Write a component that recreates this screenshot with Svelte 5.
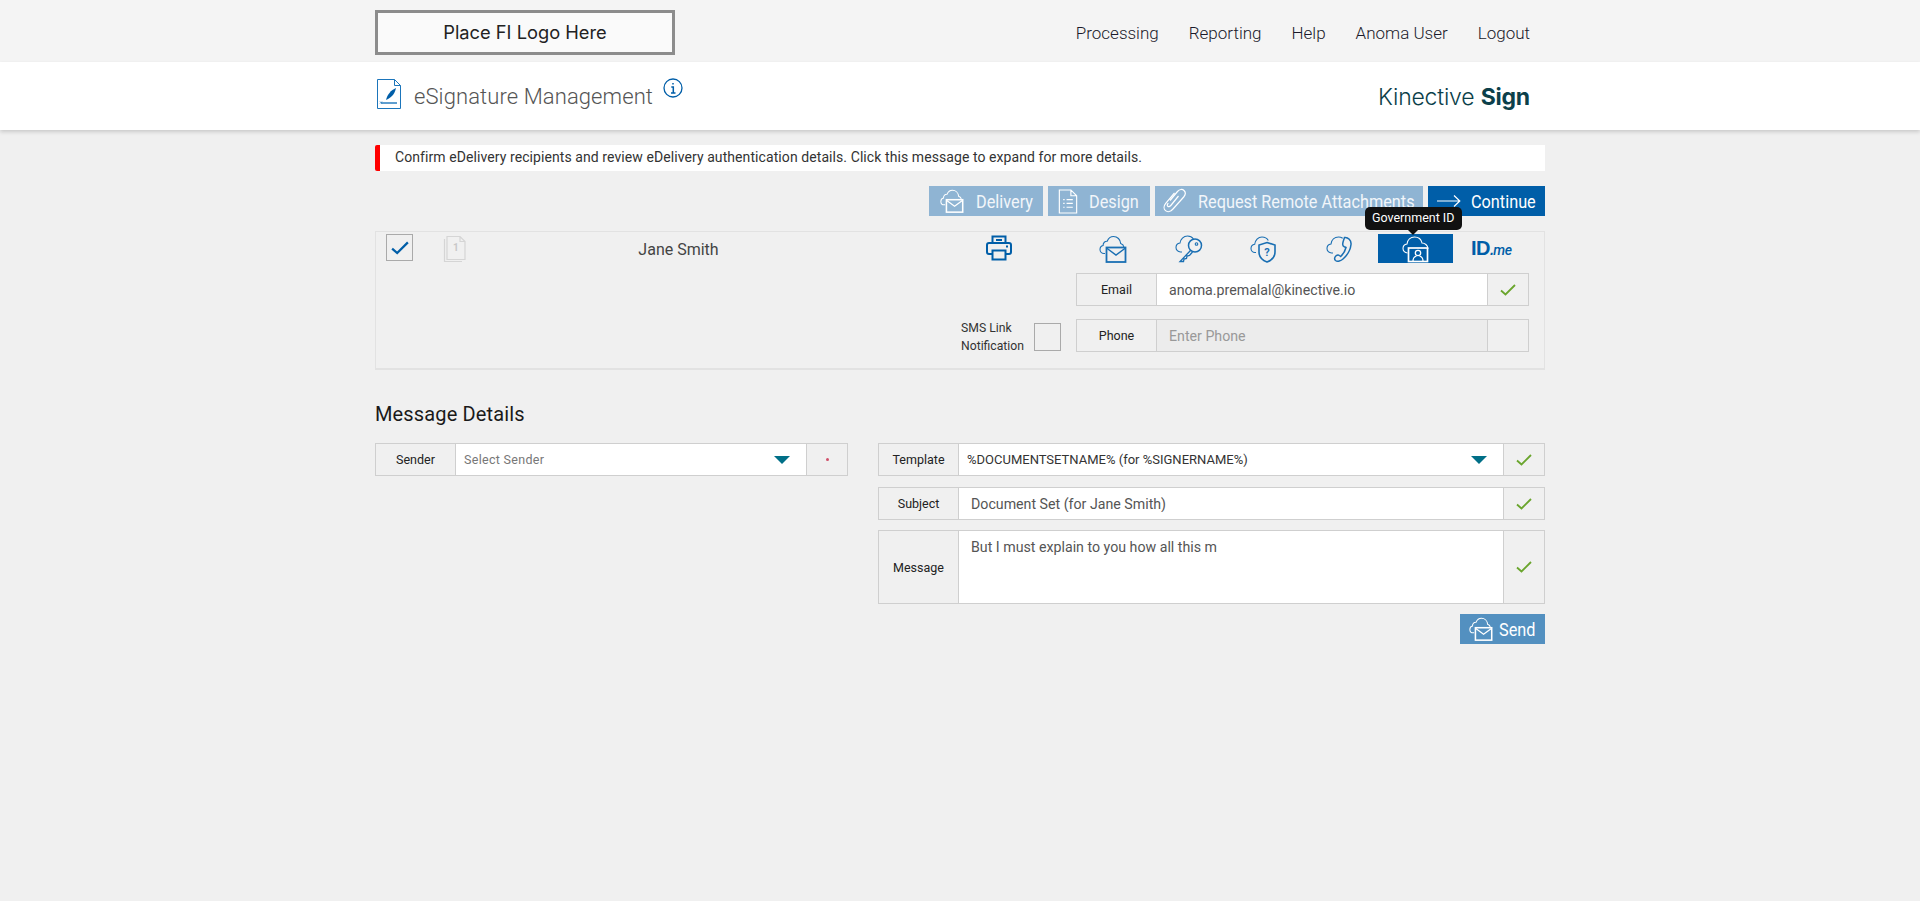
<script>
  const nav = ['Processing', 'Reporting', 'Help', 'Anoma User', 'Logout'];
</script>

{#snippet cloud()}
  <path d="M6 18.500H5C2.800 18.500 1 16.700 1 14.500c0-2 1.300-3.600 3.100-4C4 7.800 6 6 8.200 6.200 9.300 3.500 11.700 1.500 14.500 1.500c3.900 0 6.900 3 7.200 7 1.800.6 3 2 3.300 3.800" />
{/snippet}
{#snippet envelope()}
  <rect x="7.500" y="12.500" width="19" height="14.500" stroke-width="1.800" />
  <path d="M7.500 13l9.500 7 9.500-7" stroke-width="1.500" />
{/snippet}
{#snippet check()}
  <svg class="tick" viewBox="0 0 16 12"><path d="M1 6.500l4.500 4L15 1" /></svg>
{/snippet}

<div class="page">
  <header class="top">
    <div class="wrap top-in">
      <div class="logo">Place FI Logo Here</div>
      <nav>
        {#each nav as item}<a href="#top">{item}</a>{/each}
      </nav>
    </div>
  </header>

  <div class="band">
    <div class="wrap band-in">
      <div class="title">
        <svg class="doc" viewBox="0 0 24 30">
          <path d="M.5.500h17l6 6v23H.500z M17.500.500v6h6" />
          <path class="fill" d="M9 21c1-5 5-10 10-12-1 4-2 6-4 8-1.500 1.500-3 2.500-6 4z" />
          <path d="M4 24h16" stroke-width="1.400" />
          <path d="M3 22.500l2 2m0-2l-2 2" stroke-width=".7" />
        </svg>
        <span>eSignature Management</span>
        <svg class="info" viewBox="0 0 20 20">
          <circle cx="10" cy="10" r="9" />
          <path d="M10 5v1.600M8.300 9H10.300v6M8 15h4.500" stroke-width="1.500" />
        </svg>
      </div>
      <div class="brand">Kinective <b>Sign</b></div>
    </div>
  </div>

  <main class="wrap">
    <div class="alert">Confirm eDelivery recipients and review eDelivery authentication details. Click this message to expand for more details.</div>

    <div class="toolbar">
      <button class="faded delivery">
        <svg class="white" viewBox="0 0 28 28" width="26" height="24">{@render cloud()}{@render envelope()}</svg>
        <span>Delivery</span>
      </button>
      <button class="faded design">
        <svg class="white" viewBox="0 0 20 26" width="20" height="25"><path d="M1 1h12l6 6v18H1z M13 1v6h6 M5 11h1.500M8.500 11H15M5 15h1.500M8.500 15H15M5 19h1.500M8.500 19H15" /></svg>
        <span>Design</span>
      </button>
      <button class="faded remote">
        <svg class="white" viewBox="0 0 24 26" width="24" height="26"><path d="M7 12.500l7.500-9c2-2.300 4.700-2.700 6.500-1s1.500 4.300-.3 6.500L10 21c-2.400 2.800-5.500 3.300-7.500 1.600s-1.800-4.800.2-7.200l8.800-10.500M15.500 8l-7.700 9.500c-1 1.200-2.400 1.400-3 .8-.7-.6-.5-2 .5-3.200" /></svg>
        <span>Request Remote Attachments</span>
      </button>
      <button class="solid continue">
        <svg class="white" viewBox="0 0 24 14" width="24" height="14"><path d="M0 7h22.500M17 1.500L22.800 7 17 12.500" /></svg>
        <span>Continue</span>
      </button>
    </div>

    <section class="panel">
      <div class="p-left">
        <span class="box on"><svg viewBox="0 0 16 12"><path d="M1 6.500l4.500 4L15 1" /></svg></span>
        <svg class="pages" viewBox="0 0 24 28">
          <path d="M4 1.500h13l5 5v18H4z M17 1.500v5h5 M1.500 4v22.500H19" />
          <text x="10" y="16">1</text>
        </svg>
        <div class="name">Jane Smith</div>
      </div>
      <svg class="printer" viewBox="0 0 26 26">
        <path d="M6.500 8V1.500h13V8M6.500 19H3a2 2 0 0 1-2-2v-7a2 2 0 0 1 2-2h20a2 2 0 0 1 2 2v7a2 2 0 0 1-2 2h-3.500M6.500 15.500h13v9h-13zM10 5h6M20 11.500h2" stroke-width="2" />
      </svg>
      <div class="p-right">
        <div class="tabs">
          <div class="tab">
            <svg viewBox="0 0 28 28">{@render cloud()}{@render envelope()}</svg>
          </div>
          <div class="tab">
            <svg viewBox="0 0 28 28">
              <path d="M7 17H5.500C3 17 1 15 1 12.500 1 10.200 2.700 8.300 5 8 5.500 4.500 8.500 1 12.500 1c2.500 0 4.700 1.200 6 3" />
              <circle cx="20" cy="10.500" r="6.500" stroke-width="1.500" />
              <circle cx="21.500" cy="9" r="1.300" />
              <path d="M15.500 15.500L5 26.500h3.500l.5-2.500 2.500-.5.500-2.500 2.500-.5 3-3.500" stroke-width="1.300" />
            </svg>
          </div>
          <div class="tab">
            <svg viewBox="0 0 28 28">
              <path d="M6 17.500H5C2.800 17.500 1 15.700 1 13.500 1 11.300 2.600 9.600 4.700 9.300 5.200 5.500 8 2 12 2c2.500 0 5 1.300 6.300 3.500" />
              <path d="M17 7.500l8 2.500v7c0 4.800-3.500 8.300-8 10-4.500-1.700-8-5.200-8-10v-7z" stroke-width="1.600" />
              <text class="q" x="17" y="21">?</text>
            </svg>
          </div>
          <div class="tab">
            <svg viewBox="0 0 28 28">
              <path d="M7 18H5.500C3 18 1 16 1 13.500 1 11.200 2.700 9.300 5 9 5.500 5 8.500 2 12.500 2c1.500 0 3 .5 4.200 1.300" />
              <path d="M18.500 2.500c3.500-.5 7 3 6.500 7-.6 5.500-4 11-8 14.500-2 1.800-5.500 3-7.500 1.500-1.200-1-1.300-3 .3-4.500 1.200-1 2.500-1.400 3.600-.5l1.300 1c2.500-2.300 4.500-5.700 5.300-9l-1.700-.7c-1.300-.6-1.800-2-1.500-3.500.2-1.600 1-3.500 1.700-5.800z" stroke-width="1.500" />
            </svg>
          </div>
          <div class="tab active">
            <span class="tooltip">Government ID</span>
            <svg viewBox="0 0 28 28">
              <path d="M5.500 18C3 18 1 16 1 13.500 1 11.200 2.700 9.300 5 9 5.500 5 8.500 2 12.500 2c3.800 0 6.800 2.500 7.500 6 2.500 0 6 2 6 6" />
              <rect x="6.500" y="13" width="19" height="13.500" stroke-width="1.700" />
              <circle cx="16" cy="18" r="2.700" stroke-width="1.300" />
              <path d="M11 26c0-3.500 2-4.500 3.500-5M21 26c0-3.500-2-4.500-3.500-5" stroke-width="1.300" />
            </svg>
          </div>
          <div class="tab idme"><b>ID</b><i><b>.</b>me</i></div>
        </div>

        <div class="row">
          <div class="spacer"></div>
          <div class="field f-email">
            <label for="em">Email</label>
            <input id="em" value="anoma.premalal@kinective.io" />
            <div class="status">{@render check()}</div>
          </div>
        </div>
        <div class="row sms-row">
          <div class="spacer sms">
            <span>SMS Link<br />Notification</span>
            <span class="box big"></span>
          </div>
          <div class="field f-email off">
            <label for="ph">Phone</label>
            <input id="ph" placeholder="Enter Phone" />
            <div class="status"></div>
          </div>
        </div>
      </div>
    </section>

    <h2>Message Details</h2>

    <div class="details">
      <div class="col-l">
        <div class="field">
          <label for="snd">Sender</label>
          <div id="snd" class="select muted">Select Sender<span class="caret"></span></div>
          <div class="status"><span class="req"></span></div>
        </div>
      </div>
      <div class="col-r">
        <div class="field">
          <label for="tpl">Template</label>
          <div id="tpl" class="select">%DOCUMENTSETNAME% (for %SIGNERNAME%)<span class="caret"></span></div>
          <div class="status">{@render check()}</div>
        </div>
        <div class="field">
          <label for="sub">Subject</label>
          <input id="sub" value="Document Set (for Jane Smith)" />
          <div class="status">{@render check()}</div>
        </div>
        <div class="field tall">
          <label for="msg">Message</label>
          <textarea id="msg" value="But I must explain to you how all this m"></textarea>
          <div class="status">{@render check()}</div>
        </div>
        <div class="send-row">
          <button class="send">
            <svg class="white" viewBox="0 0 28 28" width="24" height="24">{@render cloud()}{@render envelope()}</svg>
            <span>Send</span>
          </button>
        </div>
      </div>
    </div>
  </main>
</div>

<style>
  :global(body) {
    margin: 0;
    background: #f0f0f0;
    font-family: Roboto, "Liberation Sans", sans-serif;
    color: #222;
  }
  .page { min-height: 901px; }
  .wrap { width: 1170px; margin: 0 auto; }

  .top { height: 62px; background: #f4f4f4; }
  .top-in { display: flex; justify-content: space-between; height: 62px; }
  .logo {
    box-sizing: border-box;
    width: 300px;
    height: 45px;
    margin-top: 10px;
    border: 3px solid #8c8c8c;
    background: #fafafa;
    display: flex;
    align-items: center;
    justify-content: center;
    font: 400 18.300px Inter, sans-serif;
    padding-bottom: 2px;
    color: #222;
  }
  nav { display: flex; gap: 30px; padding: 23px 15px 0 0; }
  nav a { font-size: 17px; font-weight: 300; color: #1a1a2a; text-decoration: none; line-height: 20px; }

  .band { height: 68px; background: #fff; box-shadow: 0 2px 4px rgba(0, 0, 0, .16); position: relative; }
  .band-in { display: flex; justify-content: space-between; height: 68px; }
  .title { display: flex; align-items: flex-start; padding: 16px 0 0 2px; }
  .title span { font-size: 22px; font-weight: 300; color: #555; margin: 6px 0 0 13px; letter-spacing: .1px; }
  .doc { width: 24px; height: 30px; margin-top: 1px; fill: none; stroke: #1b75bb; stroke-width: 1; }
  .doc .fill { fill: #005ea8; stroke: none; }
  .info { width: 20px; height: 20px; margin: 0 0 0 10px; fill: none; stroke: #005ea8; stroke-width: 1.300; }
  .brand { font: 300 23px Inter, sans-serif; color: #0c3f4a; padding: 21px 15px 0 0; letter-spacing: -.2px; }
  .brand b { font-weight: 700; }

  .alert {
    box-sizing: border-box;
    height: 26px;
    margin-top: 15px;
    background: #fff;
    border-left: 5px solid #f00;
    padding-left: 15px;
    font-size: 14px;
    line-height: 25px;
    color: #333;
    letter-spacing: .08px;
    border-radius: 2px 0 0 2px;
  }

  .toolbar { display: flex; justify-content: flex-end; gap: 5px; margin-top: 15px; }
  button {
    height: 30px;
    border: 0;
    display: flex;
    align-items: center;
    color: #fff;
    font: 400 17.500px Roboto, sans-serif;
    padding: 0;
    white-space: nowrap;
  }
  button span { display: inline-block; transform: scaleX(.93); transform-origin: left center; padding-top: 2px; }
  .faded { background: #8fb4d3; color: #f2f6fa; }
  .solid { background: #005ea8; }
  .delivery { width: 114px; padding-left: 10px; gap: 11px; }
  .design { width: 102px; padding-left: 10px; gap: 11px; }
  .remote { width: 268px; padding-left: 8px; gap: 11px; }
  .continue { width: 117px; padding-left: 9px; gap: 10px; }
  .white { fill: none; stroke: #fff; stroke-width: 1.200; flex: none; }

  .panel {
    box-sizing: border-box;
    height: 139px;
    margin-top: 15px;
    border: 1px solid #e2e2e2;
    border-bottom-width: 2px;
    display: flex;
    position: relative;
  }
  .p-left { width: 580px; display: flex; align-items: flex-start; padding: 2px 0 0 10px; box-sizing: border-box; }
  .box { box-sizing: border-box; display: block; border: 1px solid #aaa; flex: none; }
  .box.on { width: 27px; height: 27px; display: flex; align-items: center; justify-content: center; }
  .box.on svg { width: 18px; height: 14px; fill: none; stroke: #005ea8; stroke-width: 2; }
  .box.big { width: 27px; height: 28px; }
  .pages { width: 24px; height: 28px; margin: 1px 0 0 30px; fill: none; stroke: #d5d5d5; stroke-width: 1.200; flex: none; }
  .pages text { font: 700 10px Roboto, sans-serif; fill: #c8c8c8; stroke: none; }
  .name { flex: 1; text-align: center; font-size: 16px; color: #444; padding: 6px 66px 0 0; }
  .printer { width: 26px; height: 26px; margin: 3px 0 0 30px; fill: none; stroke: #005ea8; flex: none; }

  .p-right { position: absolute; left: 498px; right: 15px; top: 0; }
  .tabs { display: flex; height: 29px; margin-top: 2px; padding-left: 201px; }
  .tab { flex: 1 1 0; min-width: 0; display: flex; align-items: center; justify-content: center; position: relative; }
  .tab svg { width: 28px; height: 28px; fill: none; stroke: #1a6fb3; stroke-width: 1.100; }
  .tab.active { background: #005ea8; }
  .tab.active svg { stroke: #fff; }
  .tooltip {
    position: absolute;
    top: -27px;
    left: -13px;
    width: 97px;
    height: 23px;
    background: #111;
    color: #fff;
    border-radius: 5px;
    font-size: 12.500px;
    line-height: 21px;
    text-align: center;
  }
  .tooltip::after {
    content: "";
    position: absolute;
    left: 43px;
    top: 23px;
    border: 5px solid transparent;
    border-top-color: #111;
    border-bottom: 0;
  }
  .q { font: 700 11px Roboto, sans-serif; fill: #1a6fb3; stroke: none; text-anchor: middle; }
  .idme { color: #005ea8; font-size: 20px; letter-spacing: -.5px; }
  .idme b { font-family: "Liberation Sans", sans-serif; font-weight: 700; }
  .idme i { font: italic 500 14px Roboto, sans-serif; margin-top: 3px; }

  .row { display: flex; justify-content: flex-end; }
  .row:not(.sms-row) { margin-top: 10px; }
  .sms-row { margin-top: 13px; }
  .spacer { flex: 1; }
  .sms { display: flex; justify-content: flex-end; align-items: center; gap: 10px; font-size: 12.200px; line-height: 18px; color: #333; padding-right: 15px; }

  .field { display: flex; height: 33px; box-sizing: border-box; border: 1px solid #cfcfcf; background: #f0f0f0; }
  .f-email { width: 453px; flex: none; }
  label {
    box-sizing: border-box;
    width: 80px;
    flex: none;
    border-right: 1px solid #cfcfcf;
    display: flex;
    align-items: center;
    justify-content: center;
    font-size: 12.500px;
    color: #222;
  }
  input, textarea, .select {
    flex: 1;
    min-width: 0;
    box-sizing: border-box;
    border: 0;
    outline: 0;
    background: #fff;
    font: 400 14.200px Roboto, sans-serif;
    color: #555;
    padding: 0 12px;
    margin: 0;
  }
  .off input { background: #ececec; }
  input::placeholder { color: #999; opacity: 1; }
  .status {
    box-sizing: border-box;
    width: 41px;
    flex: none;
    border-left: 1px solid #cfcfcf;
    display: flex;
    align-items: center;
    justify-content: center;
  }
  .tick { width: 16px; height: 12px; fill: none; stroke: #6aa52d; stroke-width: 1.800; }

  h2 { font-size: 20px; font-weight: 400; color: #1a1a1a; margin: 31px 0 0; line-height: 26px; letter-spacing: .15px; }

  .details { display: flex; justify-content: space-between; margin-top: 16px; }
  .col-l { width: 473px; }
  .col-r { width: 667px; display: flex; flex-direction: column; gap: 11px; }
  .col-r .field + .field.tall { margin-top: -1px; }
  .select {
    display: flex;
    align-items: center;
    justify-content: space-between;
    padding: 0 16px 0 8px;
    font-size: 13px;
    color: #333;
  }
  .select.muted { color: #777; letter-spacing: .3px; font-size: 12.500px; }
  .caret { width: 0; height: 0; border: 8px solid transparent; border-top: 8px solid #006f87; border-bottom: 0; }
  .req { width: 3px; height: 3px; border-radius: 50%; background: #d0506a; }
  .tall { height: 74px; }
  textarea { resize: none; padding: 8px 12px; line-height: 17px; display: block; }
  .send-row { display: flex; justify-content: flex-end; margin-top: -1px; }
  .send { width: 85px; background: #5390c0; padding-left: 9px; gap: 6px; }
</style>
